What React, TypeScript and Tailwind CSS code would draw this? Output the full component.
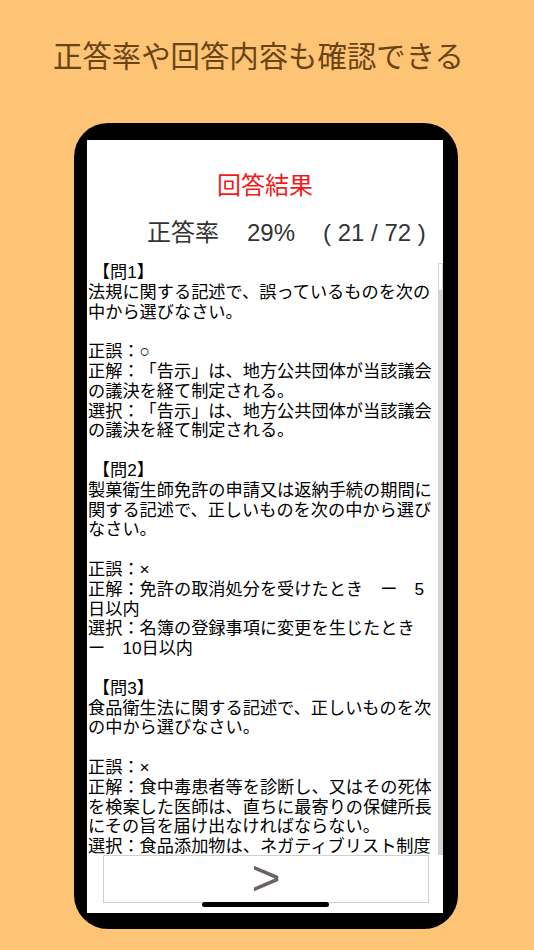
import React from 'react';

const font = { fontFamily: '"Liberation Sans", "Noto Sans CJK JP", sans-serif' };

// answer log, one entry per visual line (blank string = empty line)
const lines: string[] = [
  ' 【問1】',
  '法規に関する記述で、誤っているものを次の',
  '中から選びなさい。',
  '',
  '正誤：○',
  '正解：「告示」は、地方公共団体が当該議会',
  'の議決を経て制定される。',
  '選択：「告示」は、地方公共団体が当該議会',
  'の議決を経て制定される。',
  '',
  ' 【問2】',
  '製菓衛生師免許の申請又は返納手続の期間に',
  '関する記述で、正しいものを次の中から選び',
  'なさい。',
  '',
  '正誤：×',
  '正解：免許の取消処分を受けたとき　ー　5',
  '日以内',
  '選択：名簿の登録事項に変更を生じたとき',
  'ー　10日以内',
  '',
  ' 【問3】',
  '食品衛生法に関する記述で、正しいものを次',
  'の中から選びなさい。',
  '',
  '正誤：×',
  '正解：食中毒患者等を診断し、又はその死体',
  'を検案した医師は、直ちに最寄りの保健所長',
  'にその旨を届け出なければならない。',
  '選択：食品添加物は、ネガティブリスト制度',
  'で規制されている。',
];

export default function App() {
  return (
    <div
      className="w-[534px] h-[950px] bg-[#fec475] flex flex-col overflow-hidden [text-spacing-trim:space-all]"
      style={font}
    >
      <div className="pt-[37px] pl-[53px] text-[29.4px] leading-[40px] text-[#6a4414]">
        正答率や回答内容も確認できる
      </div>

      {/* phone frame */}
      <div className="mt-[46px] ml-[74px] w-[384px] h-[806px] bg-black rounded-[34px] pl-[13px] pr-[15px] pt-[17px] pb-[16px]">
        <div className="relative w-[356px] h-[773px] bg-white flex flex-col">
          <div className="mt-[30px] text-center text-[24px] leading-[32px] text-[#f21a1a]">回答結果</div>

          <div className="mt-[15px] pl-[60px] flex gap-[28px] text-[24px] leading-[32px] text-[#333333]">
            <span>正答率</span>
            <span>29%</span>
            <span className="whitespace-pre">( 21 / 72 )</span>
          </div>

          <div className="mt-[13px] h-[593px] flex overflow-hidden">
            <div className="flex-1 pl-[1px] pt-[1px] text-[17.2px] leading-[19.8px] text-black overflow-hidden">
              {lines.map((l, i) => (
                <div key={i} className="whitespace-pre h-[19.8px]">
                  {l}
                </div>
              ))}
            </div>
            <div className="w-[5px] mt-[1px] bg-[#d4d4d4] flex flex-col">
              <div className="h-[28px] bg-white border border-[#d4d4d4] rounded-[2px]" />
            </div>
          </div>

          <div className="ml-[16px] w-[326px] h-[48px] border border-[#d0d0d0] flex items-center justify-center">
            <span className="text-[50px] leading-none text-[#6b6262] -mt-[2px]">&gt;</span>
          </div>

          <div className="absolute left-[115px] bottom-[6px] w-[127px] h-[5px] rounded-full bg-black" />
        </div>
      </div>
    </div>
  );
}
